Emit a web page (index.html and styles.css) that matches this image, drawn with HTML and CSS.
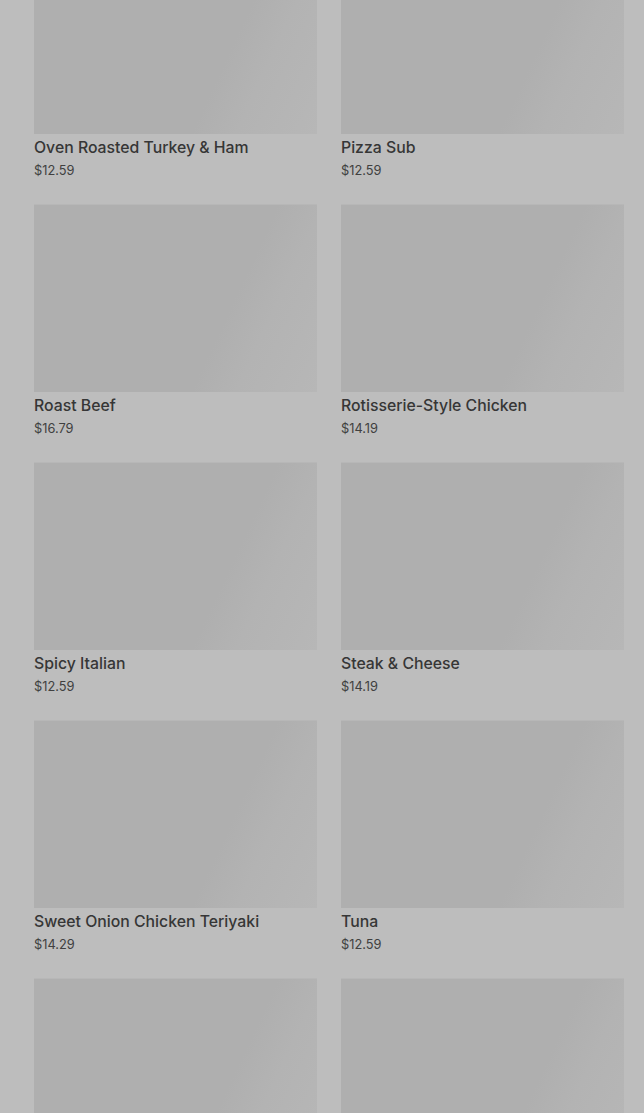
FILE: index.html
```html
<!DOCTYPE html>
<html lang="en">
<head>
    <meta charset="UTF-8">
    <meta name="viewport" content="width=device-width, initial-scale=1.0">
    <title>Menu</title>
    <link rel="stylesheet" href="styles.css">
</head>
<body>
    <div class="grid">
        <div class="card">
            <div class="thumb"></div>
            <div class="name">Oven Roasted Turkey &amp; Ham</div>
            <div class="price">$12.59</div>
        </div>
        <div class="card">
            <div class="thumb"></div>
            <div class="name">Pizza Sub</div>
            <div class="price">$12.59</div>
        </div>
        <div class="card">
            <div class="thumb"></div>
            <div class="name">Roast Beef</div>
            <div class="price">$16.79</div>
        </div>
        <div class="card">
            <div class="thumb"></div>
            <div class="name">Rotisserie-Style Chicken</div>
            <div class="price">$14.19</div>
        </div>
        <div class="card">
            <div class="thumb"></div>
            <div class="name">Spicy Italian</div>
            <div class="price">$12.59</div>
        </div>
        <div class="card">
            <div class="thumb"></div>
            <div class="name">Steak &amp; Cheese</div>
            <div class="price">$14.19</div>
        </div>
        <div class="card">
            <div class="thumb"></div>
            <div class="name">Sweet Onion Chicken Teriyaki</div>
            <div class="price">$14.29</div>
        </div>
        <div class="card">
            <div class="thumb"></div>
            <div class="name">Tuna</div>
            <div class="price">$12.59</div>
        </div>
        <div class="card">
            <div class="thumb"></div>
        </div>
        <div class="card">
            <div class="thumb"></div>
        </div>
    </div>
</body>
</html>
```

FILE: styles.css
```css
body {margin: 0; background: #bdbdbd; font-family: Inter, "Open Sans", sans-serif; overflow: hidden;}
.grid {display: grid; grid-template-columns: 283px 283px; column-gap: 24px; row-gap: 23px; padding: 0 20px 0 34px; margin-top: -54px;}
.card {display: flex; flex-direction: column;}
.thumb {height: 187px; border-top: 1px solid #b7b7b7; background: linear-gradient(115deg, #afafaf 0%, #afafaf 66%, #b3b3b3 78%, #b7b7b7 100%);}
.name {margin-top: 2px; font-size: 15.8px; line-height: 24px; font-weight: 500; color: #363636;}
.price {margin-top: 1px; font-size: 12.8px; line-height: 20px; color: #404040;}
```
